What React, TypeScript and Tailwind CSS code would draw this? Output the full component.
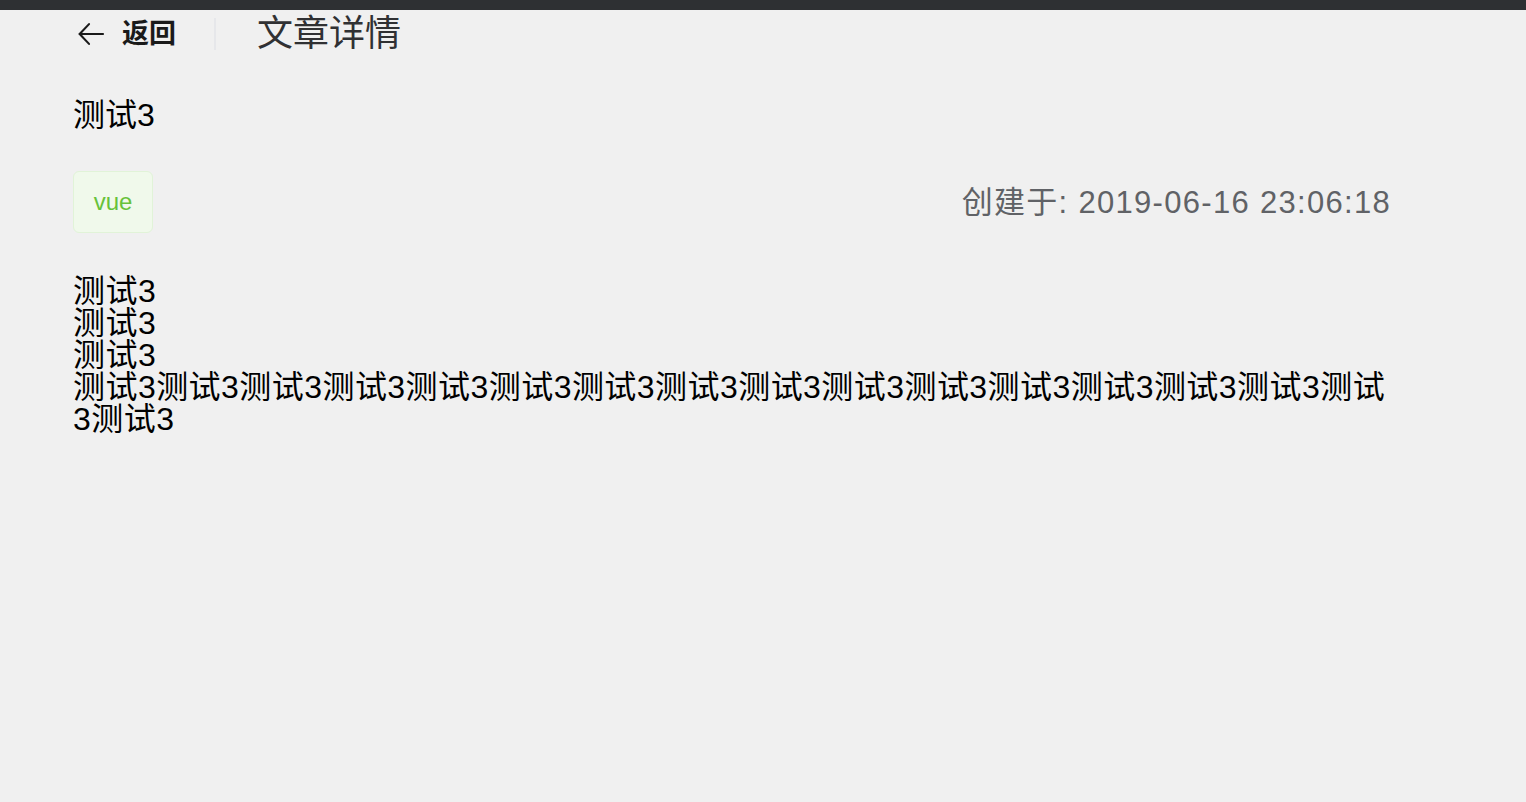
import React from "react";

const font = { fontFamily: '"Liberation Sans", "Noto Sans CJK SC", sans-serif' };

const longLine =
  "测试3测试3测试3测试3测试3测试3测试3测试3测试3测试3测试3测试3测试3测试3测试3测试3测试3";

export default function App() {
  return (
    <div className="min-h-screen bg-[#f0f0f0] text-black" style={font}>
      {/* top window strip */}
      <div className="h-[10px] bg-[#2e3033]" />

      <div className="w-[1318px] pl-[73px] box-content">
        {/* Header */}
        <header className="flex h-[48px] items-center">
          <button className="ml-[2px] flex items-center gap-[15px] text-[#1a1a1a]">
            <svg width="32" height="32" viewBox="0 0 24 24" fill="none" stroke="currentColor" strokeWidth="1.6" strokeLinecap="round" strokeLinejoin="round">
              <path d="M21 12H3.5" />
              <path d="M10.5 4.6 3.5 12l7 7.4" />
            </svg>
            <span className="text-[27px] font-bold leading-none">返回</span>
          </button>
          <div className="ml-[38px] h-[32px] w-[2px] bg-[#e6e7ea]" />
          <h1 className="ml-[41px] text-[36px] leading-none text-[#303133]">文章详情</h1>
        </header>

        {/* Title */}
        <h2 className="mt-[39px] text-[32px] leading-[36px]">测试3</h2>

        {/* Meta row */}
        <div className="mt-[38px] flex items-center justify-between">
          <span className="flex h-[62px] w-[80px] items-center justify-center rounded-[6px] border border-[#e1f3d8] bg-[#f0f9eb] text-[24px] text-[#67c23a]">
            vue
          </span>
          <span className="pt-[3px] text-[31px] tracking-[1.3px] text-[#606266]">创建于: 2019-06-16 23:06:18</span>
        </div>

        {/* Body */}
        <div className="mt-[42px] text-[32px] leading-[32px] tracking-[0.45px] break-all">
          <p>测试3</p>
          <p>测试3</p>
          <p>测试3</p>
          <p>{longLine}</p>
        </div>
      </div>
    </div>
  );
}
